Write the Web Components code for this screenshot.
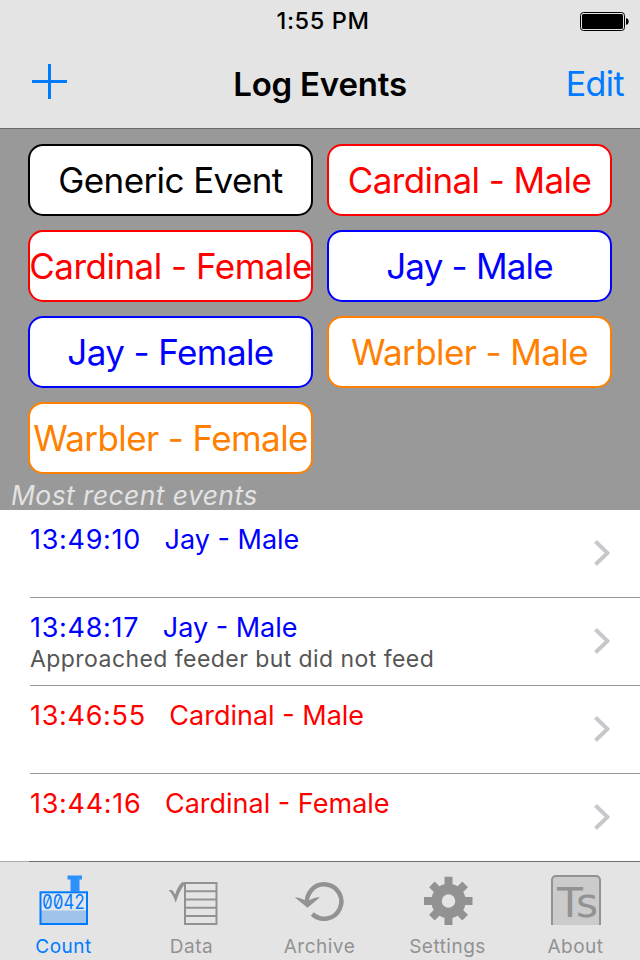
<!DOCTYPE html>
<html lang="en">
<head>
<meta charset="utf-8">
<title>Log Events</title>
<style>
    body {
        margin: 0;
        font-family: Inter, "Liberation Sans", sans-serif;
    }
</style>
</head>
<body>
<log-app>
    <nav-bar slot="top" time="1:55 PM" heading="Log Events" action="Edit"></nav-bar>
    <event-grid slot="main">
        <event-button color="#000" spacing="-0.6px">Generic Event</event-button>
        <event-button color="#f00" spacing="-0.6px">Cardinal - Male</event-button>
        <event-button color="#f00" spacing="-0.5px">Cardinal - Female</event-button>
        <event-button color="#00f" spacing="-0.8px">Jay - Male</event-button>
        <event-button color="#00f" spacing="-0.6px">Jay - Female</event-button>
        <event-button color="#ff8000" spacing="-0.6px">Warbler - Male</event-button>
        <event-button color="#ff8000" spacing="-0.6px">Warbler - Female</event-button>
        <span slot="caption">Most recent events</span>
    </event-grid>
    <event-list slot="main">
        <event-row color="#00f" time="13:49:10" name="Jay - Male"></event-row>
        <event-row color="#00f" time="13:48:17" name="Jay - Male">Approached feeder but did not feed</event-row>
        <event-row color="#f00" time="13:46:55" name="Cardinal - Male"></event-row>
        <event-row color="#f00" time="13:44:16" name="Cardinal - Female"></event-row>
    </event-list>
    <tab-bar slot="bottom">
        <tab-item icon="count" active>Count</tab-item>
        <tab-item icon="data">Data</tab-item>
        <tab-item icon="archive">Archive</tab-item>
        <tab-item icon="settings">Settings</tab-item>
        <tab-item icon="about">About</tab-item>
    </tab-bar>
</log-app>

<script>
// Small helper: every component attaches an open root from its markup
function attach(el, html) {
    const template = document.createElement('template');
    template.innerHTML = html;
    const root = el.attachShadow({ mode: 'open' });
    root.appendChild(template.content.cloneNode(true));
    return root;
}

class LogApp extends HTMLElement {
    constructor() {
        super();
        attach(this, `
            <style>
                :host {
                    display: flex;
                    flex-direction: column;
                    width: 640px;
                    height: 960px;
                    overflow: hidden;
                    background: #fff;
                }
                main { flex: 1; min-height: 0; overflow: hidden; }
            </style>
            <slot name="top"></slot>
            <main><slot name="main"></slot></main>
            <slot name="bottom"></slot>
        `);
    }
}

class NavBar extends HTMLElement {
    connectedCallback() {
        const root = attach(this, `
            <style>
                :host {
                    display: block;
                    box-sizing: border-box;
                    height: 129px;
                    background: #e4e4e4;
                    border-bottom: 1px solid #6b6b6b;
                }
                .status, .bar {
                    display: grid;
                    grid-template-columns: 1fr auto 1fr;
                    align-items: center;
                }
                .status { height: 40px; padding: 0 10px; }
                .time { margin-left: 6px; font-size: 23.5px; font-weight: 500; line-height: 40px; letter-spacing: 0.6px; padding-top: 1px; }
                .battery { justify-self: end; display: block; }
                .bar { height: 88px; padding: 0 16px; }
                .plus { display: block; margin: -5px 0 0 16px; }
                h1 { margin: 0; font-size: 33px; font-weight: 600; line-height: 88px; letter-spacing: -0.2px; }
                .action { justify-self: end; color: #007aff; font-size: 34px; line-height: 88px; letter-spacing: -0.6px; }
            </style>
            <div class="status">
                <span></span>
                <span class="time"></span>
                <svg class="battery" width="50" height="20" viewBox="0 0 50 20">
                    <rect x="0.5" y="1.5" width="44" height="18" rx="3" fill="none" stroke="#000"/>
                    <rect x="2" y="3" width="41" height="15" rx="1.6"/>
                    <path d="M46 7.2c3.6 0 3.6 6.6 0 6.600z"/>
                </svg>
            </div>
            <div class="bar">
                <svg class="plus" width="35" height="35" viewBox="0 0 35 35">
                    <path d="M0 17.5h35M17.5 0v35" stroke="#007aff" stroke-width="3"/>
                </svg>
                <h1></h1>
                <span class="action"></span>
            </div>
        `);
        root.querySelector('.time').textContent = this.getAttribute('time');
        root.querySelector('h1').textContent = this.getAttribute('heading');
        root.querySelector('.action').textContent = this.getAttribute('action');
    }
}

class EventGrid extends HTMLElement {
    constructor() {
        super();
        attach(this, `
            <style>
                :host {
                    display: block;
                    box-sizing: border-box;
                    height: 381px;
                    padding-top: 15px;
                    background: #999;
                }
                .grid {
                    display: grid;
                    grid-template-columns: 285px 285px;
                    grid-auto-rows: 72px;
                    gap: 14px;
                    padding-left: 28px;
                }
                .caption {
                    padding-left: 11px;
                    font-size: 26.5px;
                    font-style: italic;
                    line-height: 36px;
                    letter-spacing: 0.4px;
                    margin-top: 3px;
                    color: #e3e3e3;
                }
            </style>
            <div class="grid"><slot></slot></div>
            <div class="caption"><slot name="caption"></slot></div>
        `);
    }
}

class EventButton extends HTMLElement {
    connectedCallback() {
        attach(this, `
            <style>
                :host {
                    display: flex;
                    align-items: center;
                    justify-content: center;
                    box-sizing: border-box;
                    border: 2px solid currentColor;
                    border-radius: 15px;
                    background: #fff;
                    font-size: 35px;
                    white-space: nowrap;
                }
            </style>
            <span><slot></slot></span>
        `);
        this.style.color = this.getAttribute('color');
        this.style.letterSpacing = this.getAttribute('spacing') || 'normal';
    }
}

class EventList extends HTMLElement {
    constructor() {
        super();
        attach(this, `
            <style>
                :host { display: block; background: #fff; }
            </style>
            <slot></slot>
        `);
    }
}

class EventRow extends HTMLElement {
    connectedCallback() {
        const root = attach(this, `
            <style>
                :host {
                    display: flex;
                    align-items: center;
                    box-sizing: border-box;
                    height: 88px;
                    margin-left: 30px;
                    padding-right: 30px;
                    border-bottom: 1px solid #999;
                }
                .text { flex: 1; align-self: flex-start; padding-top: 13px; }
                .title { display: flex; gap: 23.5px; font-size: 27px; line-height: 34px; }
                .time { letter-spacing: 0.7px; }
                .note { color: #555; font-size: 23px; line-height: 28px; letter-spacing: 0.44px; }
                svg { margin-top: -2px; }
            </style>
            <div class="text">
                <div class="title"><span class="time"></span><span class="name"></span></div>
                <div class="note"><slot></slot></div>
            </div>
            <svg width="16" height="26" viewBox="0 0 16 26">
                <path d="M1.5 1.5L13.5 13 1.5 24.5" fill="none" stroke="#c7c7cc" stroke-width="4"/>
            </svg>
        `);
        root.querySelector('.title').style.color = this.getAttribute('color');
        root.querySelector('.time').textContent = this.getAttribute('time');
        root.querySelector('.name').textContent = this.getAttribute('name');
    }
}

class TabBar extends HTMLElement {
    constructor() {
        super();
        attach(this, `
            <style>
                :host {
                    display: grid;
                    grid-template-columns: repeat(5, 1fr);
                    box-sizing: border-box;
                    height: 99px;
                    border-top: 1px solid #6b6f6b;
                    border-image: linear-gradient(90deg, #adadad 30px, #6b6f6b 30px) 1;
                    background: #e4e4e4;
                }
            </style>
            <slot></slot>
        `);
    }
}

// Icons share a 60x56 box and take their colour from the tab
const ICONS = {
    count: `
        <path d="M33.500 3.500h14.500v4h-2.500v12h-9v-12h-3z" fill="#2c90ff"/>
        <rect x="7" y="20" width="46" height="32" fill="#e0e6ec"/>
        <rect x="7" y="38.500" width="46" height="13" fill="#9fc3eb"/>
        <rect x="6.500" y="20.300" width="46.500" height="31.700" fill="none" stroke="currentColor" stroke-width="2"/>
        <text x="8" y="37" font-size="19.500" textLength="43" lengthAdjust="spacingAndGlyphs" fill="currentColor" style="font-variant-numeric: slashed-zero tabular-nums">0042</text>`,
    data: `
        <path d="M23 11h31.500v41H23zM23 19.300h31.500M23 27.500h31.500M23 35.800h31.500M23 44h31.500" fill="none" stroke="currentColor" stroke-width="2"/>
        <path d="M6.500 18.500l2.500-.8c2 .5 3 2.500 4 5 2-6 4-10 7-12.500h4.500c-5 5-8 12-10.800 20.500C12 25.500 9.500 20 6.500 18.500z" fill="currentColor"/>`,
    archive: `
        <path d="M17.300 33A17.200 17.200 0 1 1 22.300 42" fill="none" stroke="currentColor" stroke-width="4.500"/>
        <path d="M4.700 25.300c5 0 9 2.200 12.500 4.500C21 27 25 25.300 30 25.300L17.500 35.700z" fill="currentColor"/>`,
    settings: `
        <g fill="currentColor" transform="translate(0 1.500)">
            <path d="M26.500 3.300h8v10h-8zM26.500 41.500h8v10h-8zM6 23.500h10v8H6zM44 23.500h10.500v8H44z"/>
            <path d="M26.500 4h8v10h-8zM26.500 41h8v10h-8zM7 23.500h10v8H7zM44 23.500h10v8H44z" transform="rotate(45 30.500 27.500)"/>
            <circle cx="30.500" cy="27.500" r="12" fill="none" stroke="currentColor" stroke-width="10.500"/>
        </g>`,
    about: `
        <path d="M6 53V8a4 4 0 0 1 4-4h40a4 4 0 0 1 4 4v45z" fill="#cbcbcb"/>
        <path d="M6 53V8a4 4 0 0 1 4-4h40a4 4 0 0 1 4 4v45" fill="none" stroke="currentColor" stroke-width="2"/>
        <text x="11" y="45" font-family="DejaVu Sans" font-size="41" textLength="41" lengthAdjust="spacingAndGlyphs" fill="currentColor">Ts</text>`
};

class TabItem extends HTMLElement {
    connectedCallback() {
        attach(this, `
            <style>
                :host {
                    display: flex;
                    flex-direction: column;
                    align-items: center;
                    padding-top: 10px;
                    color: #929292;
                }
                :host([active]) { color: #007aff; }
                svg { display: block; }
                .label { font-size: 19px; line-height: 24px; margin: 7px 1px 0 0; letter-spacing: 0.5px; }
            </style>
            <svg width="60" height="56" viewBox="0 0 60 56">${ICONS[this.getAttribute('icon')]}</svg>
            <span class="label"><slot></slot></span>
        `);
    }
}

customElements.define('log-app', LogApp);
customElements.define('nav-bar', NavBar);
customElements.define('event-grid', EventGrid);
customElements.define('event-button', EventButton);
customElements.define('event-list', EventList);
customElements.define('event-row', EventRow);
customElements.define('tab-bar', TabBar);
customElements.define('tab-item', TabItem);
</script>
</body>
</html>
